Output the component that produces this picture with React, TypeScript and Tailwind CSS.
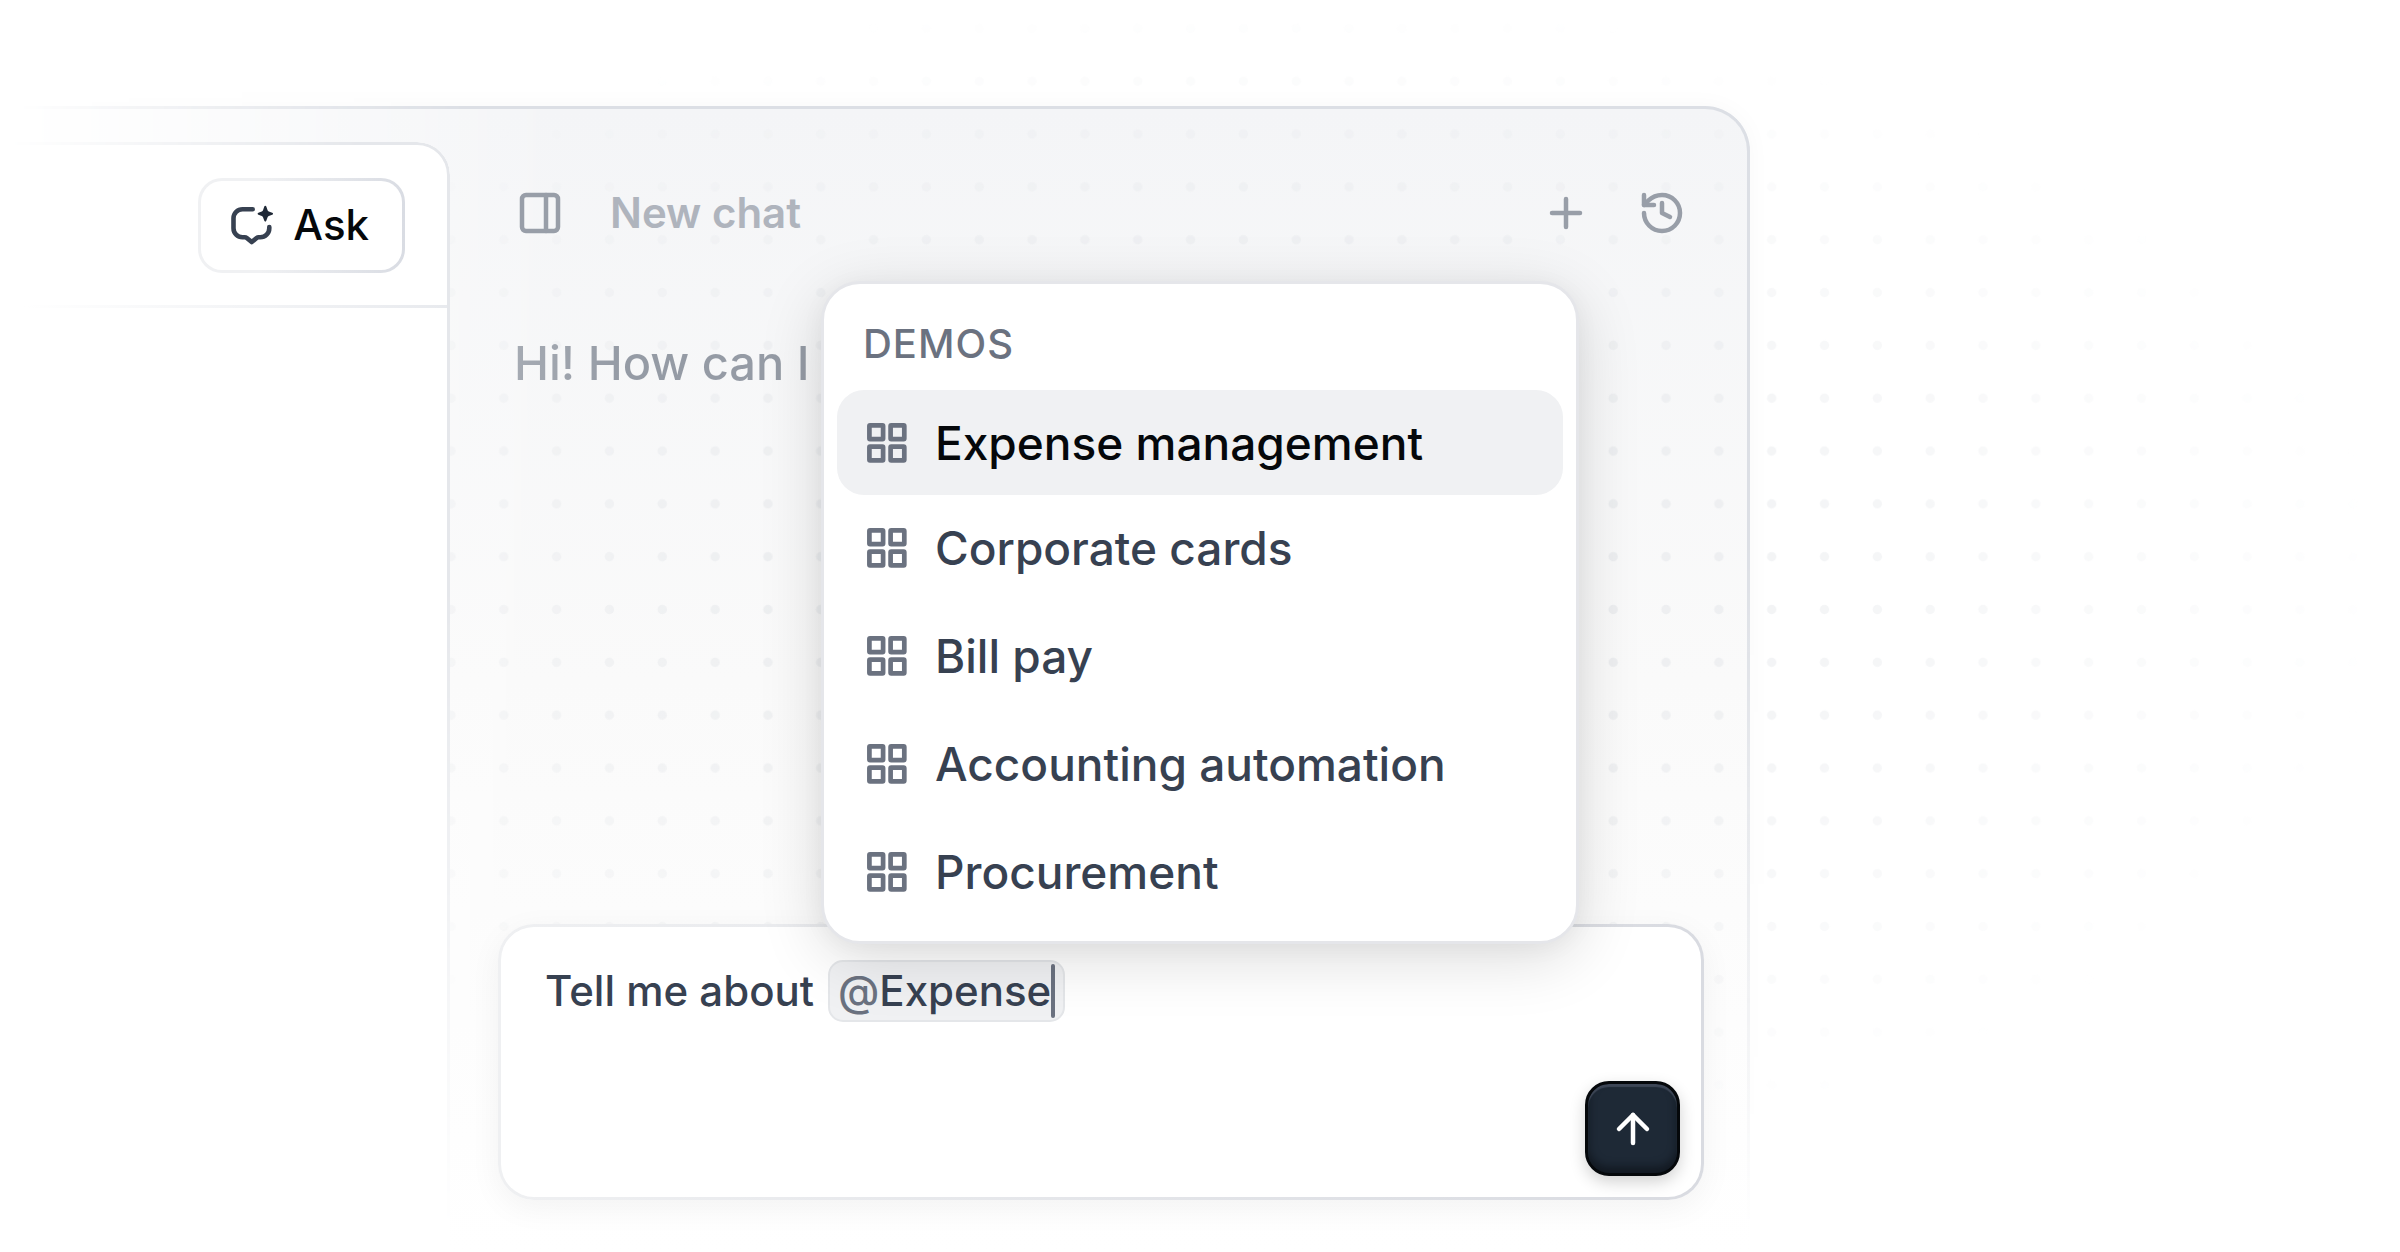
import { useState } from "react";
import { ArrowUp, History, PanelRight, Plus } from "lucide-react";

const demos = [
    "Expense management",
    "Corporate cards",
    "Bill pay",
    "Accounting automation",
    "Procurement",
];

const AskIcon = () => (
    <svg width="42" height="40" viewBox="0 0 42 40" fill="none" aria-hidden="true">
        <path
            d="M21.7 4.3H11.5a9 9 0 0 0-9 9v9.9a9 9 0 0 0 9 9h2.2c.8 0 1.5.3 2.1.8l4.9 4.1 4.9-4.1c.6-.5 1.3-.8 2.1-.8h1.6a9 9 0 0 0 9-9V22"
            stroke="#374151"
            strokeWidth="4.6"
            strokeLinecap="round"
            strokeLinejoin="round"
        />
        <path
            d="M34.3.7c.5 0 .8.3 1 .9l1.3 3.6c.2.6.6 1 1.2 1.2l3.4 1.3c1.1.4 1.1 1.6 0 2l-3.4 1.3c-.6.2-1 .6-1.2 1.2l-1.3 3.6c-.4 1.1-1.6 1.1-2 0l-1.3-3.6c-.2-.6-.6-1-1.2-1.2l-3.4-1.3c-1.1-.4-1.1-1.6 0-2l3.4-1.3c.6-.2 1-.6 1.2-1.2l1.3-3.6c.2-.6.5-.9 1-.9Z"
            fill="#1f2937"
        />
    </svg>
);

const GridIcon = () => (
    <svg width="40" height="40" viewBox="0 0 40 40" fill="none" stroke="#6b7280" strokeWidth="4.7" aria-hidden="true">
        <rect x="2.4" y="2.4" width="13.7" height="13.7" rx="0.6" />
        <rect x="23.6" y="2.4" width="13.7" height="13.7" rx="0.6" />
        <rect x="2.4" y="23.6" width="13.7" height="13.7" rx="0.6" />
        <rect x="23.6" y="23.6" width="13.7" height="13.7" rx="0.6" />
    </svg>
);

/* Dotted backdrop, strongest behind the chat and gone towards the page edges */
const DotGrid = () => (
    <svg className="absolute inset-0 z-10 h-full w-full pointer-events-none" aria-hidden="true">
        <defs>
            <pattern id="dots" width="52.83" height="52.83" patternUnits="userSpaceOnUse">
                <circle cx="28.3" cy="28.4" r="4.7" fill="#dfe2e6" />
            </pattern>
            <radialGradient id="dots-fade" cx="0.515" cy="0.47" r="0.48">
                <stop offset="0" stopColor="white" stopOpacity="0.72" />
                <stop offset="1" stopColor="white" stopOpacity="0" />
            </radialGradient>
            <mask id="dots-mask">
                <rect width="100%" height="100%" fill="url(#dots-fade)" />
            </mask>
        </defs>
        <rect width="100%" height="100%" fill="url(#dots)" mask="url(#dots-mask)" />
    </svg>
);

/* Tint and outline of the window; the outline fades out to the left and the bottom */
const WindowFrame = () => (
    <>
        <div className="absolute inset-0 z-0 rounded-tr-[45px] bg-linear-to-b from-[#f4f5f7] via-[#fafafa] to-white pointer-events-none [mask-image:linear-gradient(to_right,transparent_1%,black_32%)]" />
        <div className="absolute -top-10 -right-10 bottom-0 left-0 z-0 pt-10 pr-10 pointer-events-none [mask-image:linear-gradient(to_right,transparent_1%,black_26%),linear-gradient(to_bottom,black_40%,transparent_98%)] [mask-composite:intersect]">
            <div className="h-full rounded-tr-[45px] border-t-[3px] border-r-[3px] border-[#dcdfe5] shadow-[0_0_24px_rgba(0,0,0,0.03)]" />
        </div>
    </>
);

const Sidebar = () => (
    <aside className="relative z-20 mt-9 w-[450px] shrink-0 rounded-tr-[33px] bg-white">
        <div className="absolute inset-0 rounded-tr-[33px] border-t-[3px] border-r-[3px] border-[#e5e7eb] pointer-events-none [mask-image:linear-gradient(to_right,transparent_2%,black_80%),linear-gradient(to_bottom,black_40%,transparent_98%)] [mask-composite:intersect]" />
        <header className="mt-[3px] mr-[3px] flex h-40 items-center justify-end pr-[42px]">
            <button
                type="button"
                className="rounded-[24px] bg-linear-to-r from-[#f0f1f3] from-30% to-[#d9dce3] p-[3px]"
            >
                <span className="flex h-[89px] items-center gap-5 rounded-[21px] bg-white pr-[33px] pl-[30px] text-[42px] leading-[48px] font-medium text-[#05080b]">
                    <AskIcon />
                    Ask
                </span>
            </button>
        </header>
        <div className="mr-[3px] h-[3px] bg-linear-to-r from-transparent from-5% to-[#e8eaee]" />
    </aside>
);

const DemoMenu = () => {
    const [active, setActive] = useState(0);

    return (
        <div className="absolute right-[125px] bottom-[256px] left-[323px] rounded-[39px] border-[3px] border-[#e5e6ea] bg-white px-[13px] pt-[13px] pb-[17px] shadow-[0_14px_64px_rgba(0,0,0,0.14),0_4px_24px_rgba(0,0,0,0.04)]">
            <h2 className="flex h-[93px] items-center pl-[26px] text-[40px] leading-[48px] font-medium tracking-wide text-[#6b7280]">
                DEMOS
            </h2>
            <ul>
                {demos.map((demo, i) => (
                    <li key={demo} className="nth-[n+3]:mt-[3px]">
                        <button
                            type="button"
                            onMouseEnter={() => setActive(i)}
                            className={
                                i === active
                                    ? "flex h-[105px] w-full items-center gap-7 rounded-[27px] bg-[#f0f1f3] px-[30px] text-[46px] leading-[56px] font-medium text-[#05080b]"
                                    : "flex h-[105px] w-full items-center gap-7 rounded-[27px] px-[30px] text-[46px] leading-[56px] font-medium text-[#374151]"
                            }
                        >
                            <GridIcon />
                            {demo}
                        </button>
                    </li>
                ))}
            </ul>
        </div>
    );
};

const Composer = () => {
    const [draft, setDraft] = useState("Tell me about");
    const [mention, setMention] = useState("Expense");

    return (
        <form
            onSubmit={(e) => e.preventDefault()}
            className="relative mt-auto rounded-[36px] bg-linear-to-r from-[#eff0f2] to-[#d9dbe1] p-[3px] shadow-[0_8px_32px_rgba(0,0,0,0.05)]"
        >
            <div className="flex h-[270px] flex-col justify-between rounded-[33px] bg-white pt-[33px] pb-[21px]">
                <div className="flex items-center gap-[14px] pl-11 text-[42px] leading-[50px] font-medium text-[#374151]">
                    <input
                        aria-label="Message"
                        value={draft}
                        onChange={(e) => setDraft(e.target.value)}
                        className="field-sizing-content outline-none"
                    />
                    <span className="flex h-[62px] items-center rounded-[15px] border-2 border-[#e4e6e9] bg-[#f0f1f3] px-2">
                        <span className="text-[#6b7280]">@</span>
                        <input
                            aria-label="Mention"
                            value={mention}
                            onChange={(e) => setMention(e.target.value)}
                            className="field-sizing-content outline-none"
                        />
                        <span className="h-[54px] w-1 rounded-full bg-[#6b7280]" />
                    </span>
                </div>
                <button
                    type="submit"
                    aria-label="Send"
                    className="mr-[21px] flex size-[95px] items-center justify-center self-end rounded-[24px] border-[3px] border-[#05080b] bg-[#1e2936] text-white shadow-[0_6px_16px_rgba(0,0,0,0.18),inset_0_3px_1px_#3d4656,inset_0_-6px_8px_rgba(5,8,11,0.5)]"
                >
                    <ArrowUp size={48} strokeWidth={2.25} />
                </button>
            </div>
            <DemoMenu />
        </form>
    );
};

const Chat = () => (
    <section className="relative z-20 flex flex-1 flex-col pt-[83px] pr-[46px] pb-[52px] pl-12">
        <header className="flex h-12 items-center px-[18px] text-[#989ea8]">
            <button type="button" aria-label="Toggle panel">
                <PanelRight size={48} strokeWidth={2.25} />
            </button>
            <h1 className="ml-[46px] text-[42px] leading-[48px] font-semibold text-[#afb4bd]">New chat</h1>
            <div className="ml-auto flex gap-12">
                <button type="button" aria-label="Start a chat">
                    <Plus size={48} strokeWidth={2.25} />
                </button>
                <button type="button" aria-label="History">
                    <History size={48} strokeWidth={2.25} />
                </button>
            </div>
        </header>
        <p className="mt-24 self-start bg-linear-to-r from-[#a8adb5] to-[#959ba5] to-40% bg-clip-text pl-4 text-[47px] leading-[60px] font-medium text-transparent">
            Hi! How can I
        </p>
        <Composer />
    </section>
);

const App = () => (
    <main className="relative isolate flex min-h-screen overflow-hidden bg-white pt-[106px] pr-[650px] font-['Inter',sans-serif]">
        <DotGrid />
        <div className="relative flex flex-1">
            <WindowFrame />
            <Sidebar />
            <Chat />
        </div>
    </main>
);

export default App;
